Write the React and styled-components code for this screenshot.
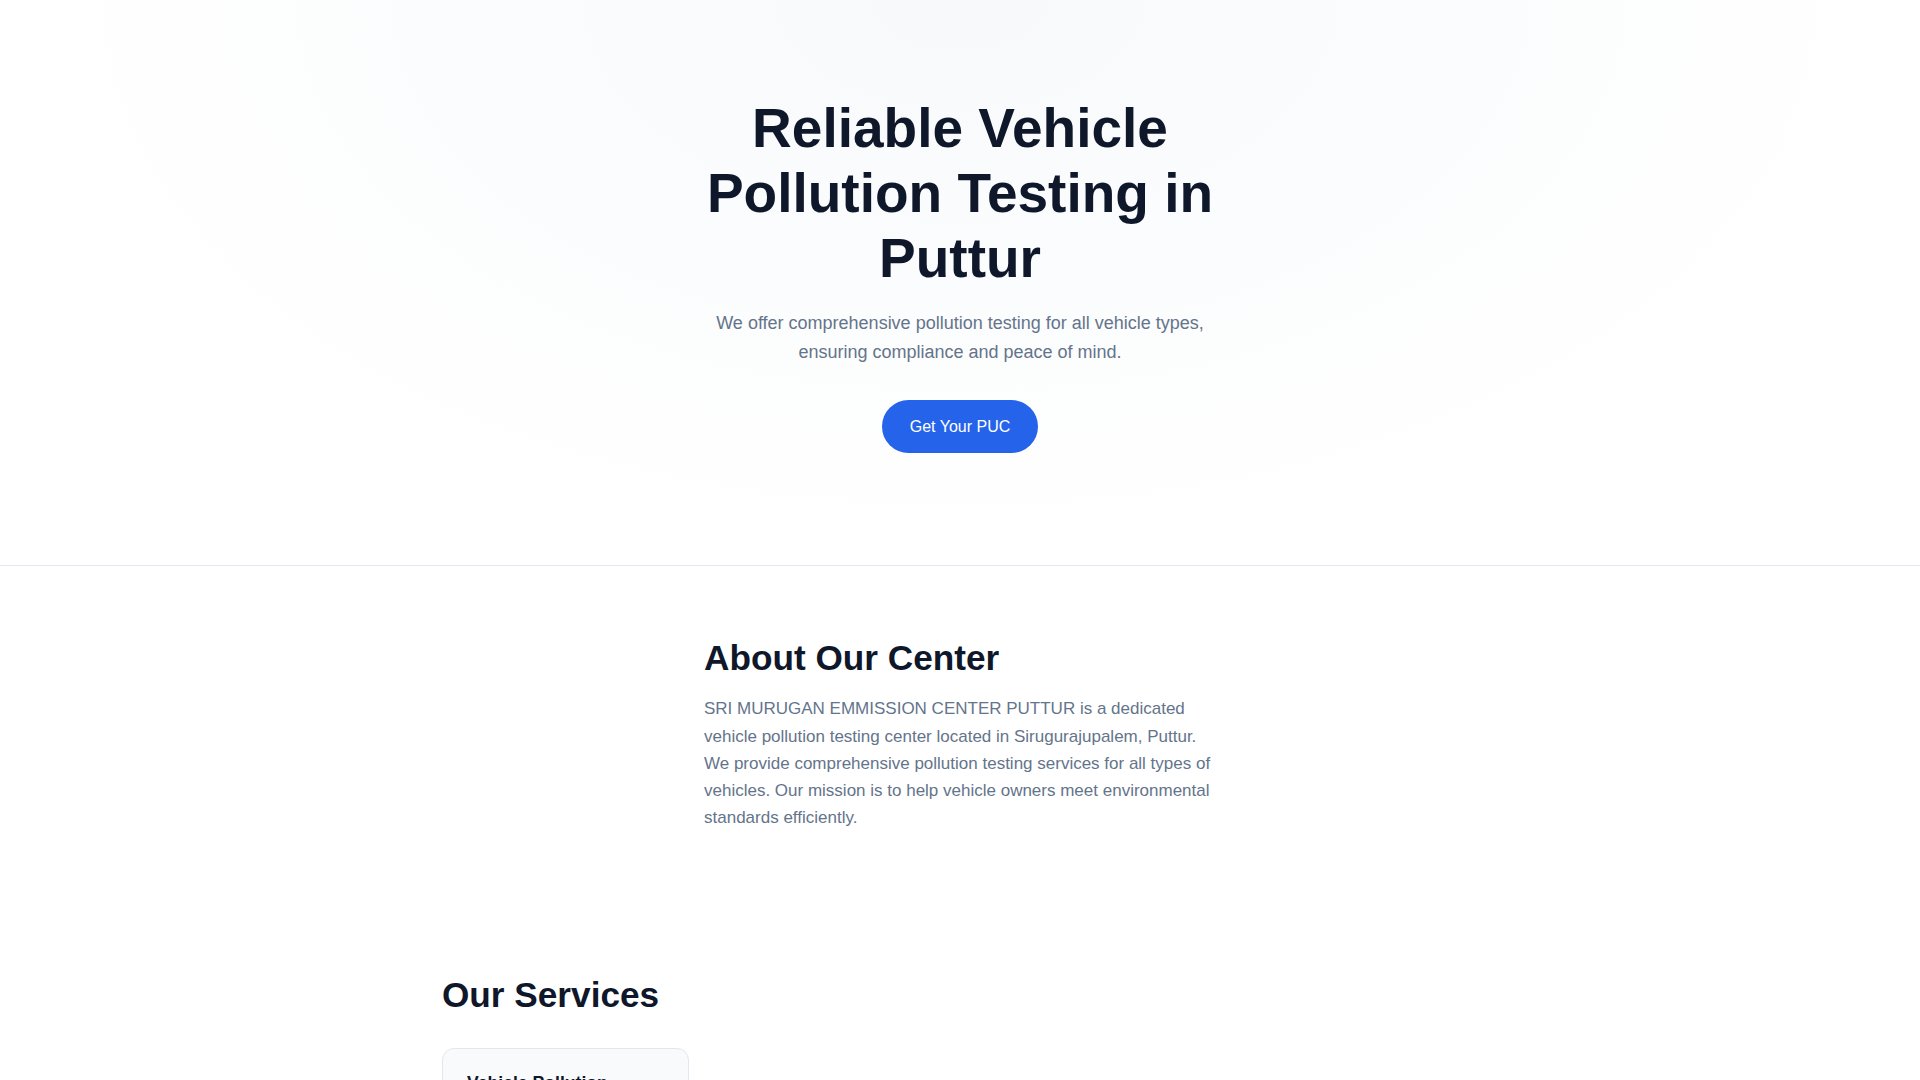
import React from "react";
import styled, { createGlobalStyle } from "styled-components";

const GlobalStyle = createGlobalStyle`
  * { box-sizing: border-box; }
  body {
    margin: 0;
    background: #ffffff;
    font-family: "Liberation Sans", Arial, sans-serif;
    color: #0f172a;
  }
`;

const services = [
  {
    title: "Vehicle Pollution Testing",
    text: "Accurate emission testing for two-wheelers, cars and commercial vehicles.",
  },
];

function App() {
  return (
    <>
      <GlobalStyle />
      <Page>
        <Hero>
          <HeroInner>
            <HeroTitle>Reliable Vehicle Pollution Testing in Puttur</HeroTitle>
            <HeroText>
              We offer comprehensive pollution testing for all vehicle types,
              ensuring compliance and peace of mind.
            </HeroText>
            <CtaButton href="#contact">Get Your PUC</CtaButton>
          </HeroInner>
        </Hero>

        <About>
          <AboutInner>
            <SectionTitle>About Our Center</SectionTitle>
            <AboutText>
              SRI MURUGAN EMMISSION CENTER PUTTUR is a dedicated vehicle
              pollution testing center located in Sirugurajupalem, Puttur. We
              provide comprehensive pollution testing services for all types of
              vehicles. Our mission is to help vehicle owners meet environmental
              standards efficiently.
            </AboutText>
          </AboutInner>
        </About>

        <Services>
          <Container>
            <SectionTitle>Our Services</SectionTitle>
            <CardGrid>
              {services.map((s) => (
                <Card key={s.title}>
                  <CardTitle>{s.title}</CardTitle>
                  <CardText>{s.text}</CardText>
                </Card>
              ))}
            </CardGrid>
          </Container>
        </Services>
      </Page>
    </>
  );
}

export default App;

const Page = styled.main`
  width: 100%;
`;

const Hero = styled.section`
  background: radial-gradient(ellipse at top, #f7f9fb 0%, #ffffff 68%);
  border-bottom: 1px solid #e2e8f0;
  padding: 96px 24px 112px;
  display: flex;
  justify-content: center;
`;

const HeroInner = styled.div`
  max-width: 540px;
  display: flex;
  flex-direction: column;
  align-items: center;
  text-align: center;
`;

const HeroTitle = styled.h1`
  margin: 0;
  font-size: 55px;
  line-height: 65px;
  font-weight: 700;
  color: #0f172a;
`;

const HeroText = styled.p`
  margin: 18px 0 0;
  font-size: 18px;
  line-height: 1.6;
  color: #64748b;
`;

const CtaButton = styled.a`
  margin-top: 33px;
  display: inline-block;
  padding: 14px 28px;
  line-height: 25px;
  font-size: 16px;
  color: #ffffff;
  background: #2563eb;
  border-radius: 9999px;
  text-decoration: none;
`;

const About = styled.section`
  padding: 71px 24px 71px;
`;

const AboutInner = styled.div`
  max-width: 512px;
  margin: 0 auto;
`;

const SectionTitle = styled.h2`
  margin: 0;
  font-size: 35.2px;
  line-height: 1.2;
  font-weight: 700;
  color: #0f172a;
`;

const AboutText = styled.p`
  margin: 16.5px 0 0;
  font-size: 17px;
  line-height: 1.6;
  color: #64748b;
`;

const Services = styled.section`
  padding: 72px 0 80px;
`;

const Container = styled.div`
  max-width: 1036px;
  margin: 0 auto;
`;

const CardGrid = styled.div`
  margin-top: 31px;
  display: grid;
  grid-template-columns: repeat(4, 1fr);
  gap: 16px;
`;

const Card = styled.div`
  background: #f8fafc;
  border: 1px solid #e2e8f0;
  border-radius: 12px;
  padding: 23px 24px 24px;
`;

const CardTitle = styled.h3`
  margin: 0;
  font-size: 17.6px;
  line-height: 1.3;
  font-weight: 700;
  color: #0f172a;
`;

const CardText = styled.p`
  margin: 8px 0 0;
  font-size: 15px;
  line-height: 1.6;
  color: #64748b;
`;
